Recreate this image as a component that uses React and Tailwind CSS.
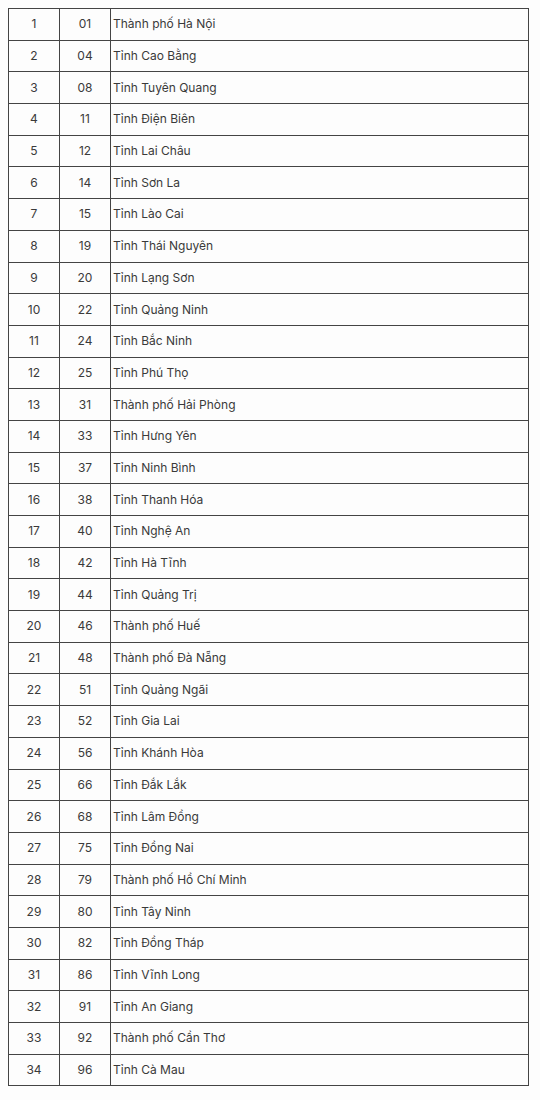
import React from 'react';

const rows = [
    ['1', '01', 'Thành phố Hà Nội'],
    ['2', '04', 'Tỉnh Cao Bằng'],
    ['3', '08', 'Tỉnh Tuyên Quang'],
    ['4', '11', 'Tỉnh Điện Biên'],
    ['5', '12', 'Tỉnh Lai Châu'],
    ['6', '14', 'Tỉnh Sơn La'],
    ['7', '15', 'Tỉnh Lào Cai'],
    ['8', '19', 'Tỉnh Thái Nguyên'],
    ['9', '20', 'Tỉnh Lạng Sơn'],
    ['10', '22', 'Tỉnh Quảng Ninh'],
    ['11', '24', 'Tỉnh Bắc Ninh'],
    ['12', '25', 'Tỉnh Phú Thọ'],
    ['13', '31', 'Thành phố Hải Phòng'],
    ['14', '33', 'Tỉnh Hưng Yên'],
    ['15', '37', 'Tỉnh Ninh Bình'],
    ['16', '38', 'Tỉnh Thanh Hóa'],
    ['17', '40', 'Tỉnh Nghệ An'],
    ['18', '42', 'Tỉnh Hà Tĩnh'],
    ['19', '44', 'Tỉnh Quảng Trị'],
    ['20', '46', 'Thành phố Huế'],
    ['21', '48', 'Thành phố Đà Nẵng'],
    ['22', '51', 'Tỉnh Quảng Ngãi'],
    ['23', '52', 'Tỉnh Gia Lai'],
    ['24', '56', 'Tỉnh Khánh Hòa'],
    ['25', '66', 'Tỉnh Đắk Lắk'],
    ['26', '68', 'Tỉnh Lâm Đồng'],
    ['27', '75', 'Tỉnh Đồng Nai'],
    ['28', '79', 'Thành phố Hồ Chí Minh'],
    ['29', '80', 'Tỉnh Tây Ninh'],
    ['30', '82', 'Tỉnh Đồng Tháp'],
    ['31', '86', 'Tỉnh Vĩnh Long'],
    ['32', '91', 'Tỉnh An Giang'],
    ['33', '92', 'Thành phố Cần Thơ'],
    ['34', '96', 'Tỉnh Cà Mau'],
];

export default function App() {
    return (
        <div className="min-h-[1100px] bg-[#fdfdfd] pt-2 pl-2 font-['Inter','Liberation_Sans',sans-serif] text-[12px] text-[#3a3a3a]">
            <table className="w-[521px] table-fixed border-collapse">
                <colgroup>
                    <col className="w-[51px]" />
                    <col className="w-[51px]" />
                    <col />
                </colgroup>
                <tbody>
                    {rows.map(([stt, code, name]) => (
                        <tr key={stt} className="h-[31.7px]">
                            <td className="border border-[#444] p-0 text-center">{stt}</td>
                            <td className="border border-[#444] p-0 text-center">{code}</td>
                            <td className="border border-[#444] py-0 pl-[2px] pr-0">{name}</td>
                        </tr>
                    ))}
                </tbody>
            </table>
        </div>
    );
}
